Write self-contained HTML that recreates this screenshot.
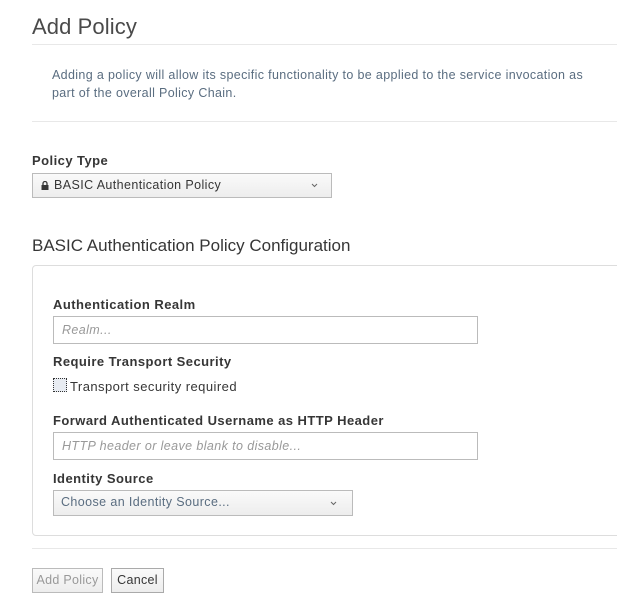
<!DOCTYPE html>
<html><head><style>
body{margin:0;width:617px;height:611px;background:#fff;font-family:"Liberation Sans",sans-serif;color:#363636;position:relative;overflow:hidden}
.a{position:absolute;white-space:nowrap}
.hr{position:absolute;left:32px;width:600px;height:1px;background:#e8e8e8}
.lbl{font-weight:bold;font-size:13px;color:#363636;letter-spacing:0.45px}
.inp{position:absolute;border:1px solid #bbb;background:#fff;box-sizing:border-box;font-size:12.5px;font-style:italic;color:#999;padding:6px 8px;letter-spacing:0.4px}
.sel{position:absolute;border:1px solid #bbb;box-sizing:border-box;background:linear-gradient(#fafafa,#ededed);font-size:12.5px;padding:4px 8px;letter-spacing:0.4px}
.car{position:absolute;right:13px;top:9px}
.btn{position:absolute;border:1px solid #bbb;box-sizing:border-box;background:linear-gradient(#fafafa,#ededed);font-size:12.5px;text-align:center;line-height:22px;letter-spacing:0.3px}
</style></head><body>
<div class="a" style="left:32px;top:14px;font-size:22px;color:#4a4a4a;letter-spacing:0.1px">Add Policy</div>
<div class="hr" style="top:44px"></div>
<div class="a" style="left:52px;top:66px;font-size:12.5px;line-height:18px;color:#5a6d80;letter-spacing:0.35px">Adding a policy will allow its specific functionality to be applied to the service invocation as<br>part of the overall Policy Chain.</div>
<div class="hr" style="top:121px"></div>
<div class="a lbl" style="left:32px;top:153px">Policy Type</div>
<div class="sel" style="left:32px;top:173px;width:300px;height:25px;color:#363636">
<svg width="8" height="9" viewBox="0 0 8 9" style="vertical-align:-1px;margin-right:5px"><rect x="0.5" y="4" width="7" height="5" fill="#363636"/><path d="M2 4V2.5a2 2 0 0 1 4 0V4" fill="none" stroke="#363636" stroke-width="1.3"/></svg>BASIC Authentication Policy<svg class="car" width="7" height="5" viewBox="0 0 7 5"><path d="M1 1l2.5 2.5L6 1" fill="none" stroke="#666" stroke-width="1"/></svg></div>
<div class="a" style="left:32px;top:236px;font-size:17px;color:#363636">BASIC Authentication Policy Configuration</div>
<div class="a" style="left:32px;top:265px;width:620px;height:271px;border:1px solid #ddd;border-radius:4px;box-sizing:border-box"></div>
<div class="a lbl" style="left:53px;top:297px">Authentication Realm</div>
<div class="inp" style="left:53px;top:316px;width:425px;height:28px">Realm...</div>
<div class="a lbl" style="left:53px;top:354px">Require Transport Security</div>
<div class="a" style="left:53px;top:378px;width:14px;height:14px;border:1px dotted #333;box-sizing:border-box;background:#e8ecf2"></div>
<div class="a" style="left:70px;top:379px;font-size:13px;color:#363636;letter-spacing:0.45px">Transport security required</div>
<div class="a lbl" style="left:53px;top:413px">Forward Authenticated Username as HTTP Header</div>
<div class="inp" style="left:53px;top:432px;width:425px;height:28px">HTTP header or leave blank to disable...</div>
<div class="a lbl" style="left:53px;top:471px">Identity Source</div>
<div class="sel" style="left:53px;top:490px;width:300px;height:26px;color:#5a6d80;padding-left:7px">Choose an Identity Source...<svg class="car" style="top:10px;right:15px" width="7" height="5" viewBox="0 0 7 5"><path d="M1 1l2.5 2.5L6 1" fill="none" stroke="#666" stroke-width="1"/></svg></div>
<div class="hr" style="top:548px"></div>
<div class="btn" style="left:32px;top:568px;width:71px;height:25px;color:#999">Add Policy</div>
<div class="btn" style="left:111px;top:568px;width:53px;height:25px;color:#363636;border-color:#aaa">Cancel</div>
</body></html>
